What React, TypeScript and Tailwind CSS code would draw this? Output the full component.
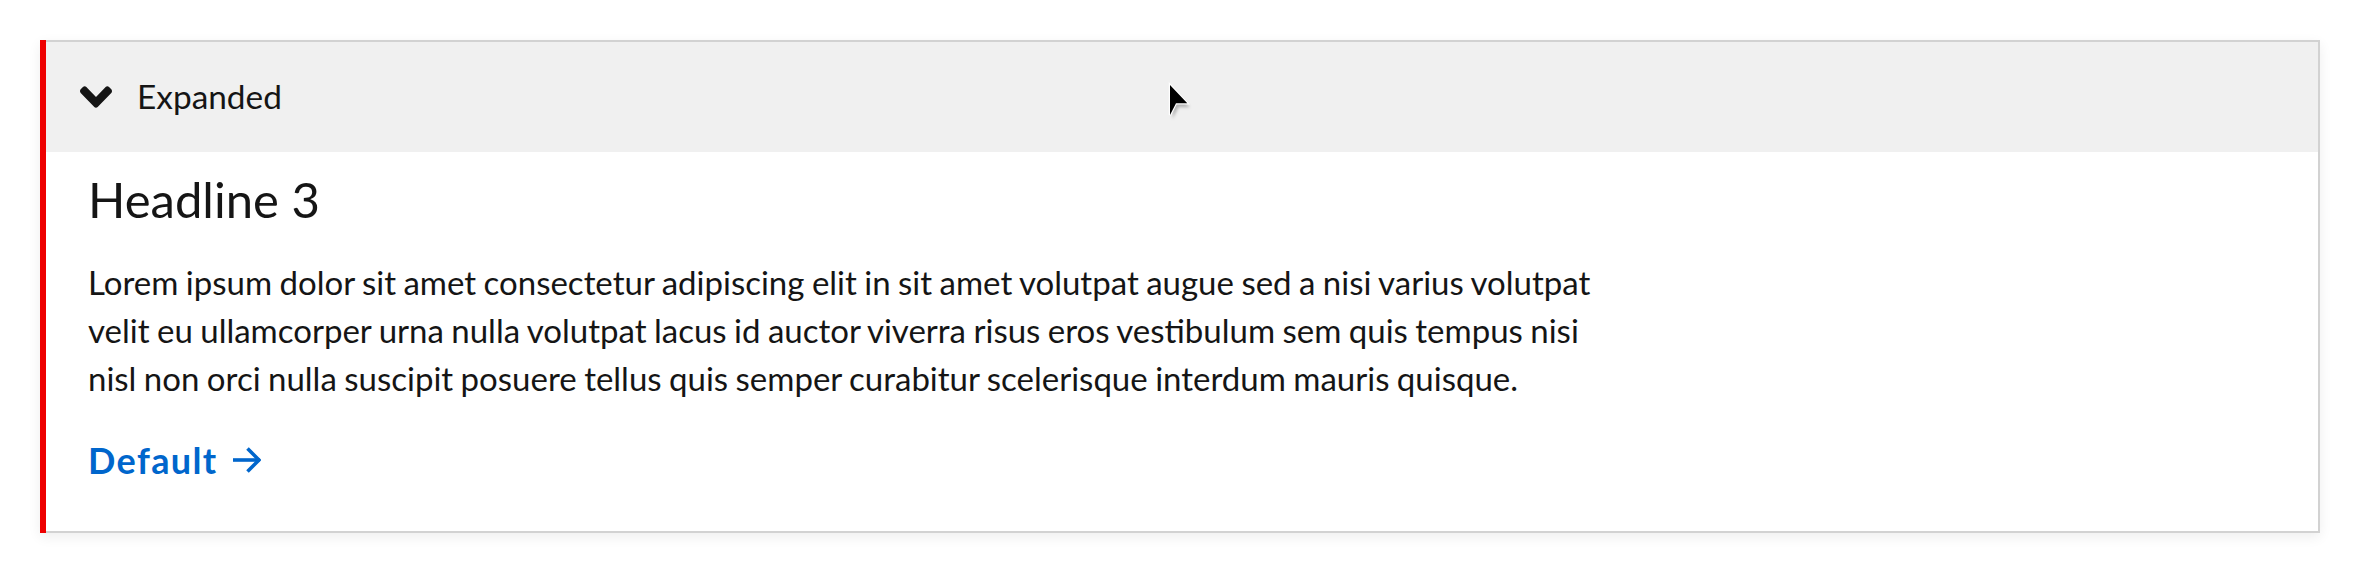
import React from "react";

function Chevron() {
  return (
    <svg width="32" height="22" viewBox="0 150 320 212" preserveAspectRatio="none" className="shrink-0">
      <path
        fill="#151515"
        d="M143 352.3L7 216.3c-9.4-9.4-9.4-24.6 0-33.9l22.6-22.6c9.4-9.4 24.6-9.4 33.9 0l96.4 96.4 96.4-96.4c9.4-9.4 24.6-9.4 33.9 0l22.6 22.6c9.4 9.4 9.4 24.6 0 33.9l-136 136c-9.4 9.5-24.6 9.5-34 .1z"
      />
    </svg>
  );
}

function Arrow() {
  return (
    <svg width="28" height="28" viewBox="0 0 28 28" className="shrink-0">
      <path d="M1 14H25" stroke="#0066cc" strokeWidth="3.6" fill="none" strokeLinecap="square" />
      <path d="M14.5 2.5L26 14L14.5 25.5" stroke="#0066cc" strokeWidth="3.6" fill="none" strokeLinejoin="miter" strokeLinecap="butt" />
    </svg>
  );
}

function Cursor() {
  return (
    <svg width="30" height="44" viewBox="0 0 30 44" className="absolute left-[1166px] top-[79px]">
      <defs>
        <filter id="cs" x="-50%" y="-50%" width="200%" height="200%">
          <feGaussianBlur stdDeviation="1.5" />
        </filter>
      </defs>
      <path d="M5 8L22.3 26.3H11L5 38Z" fill="rgba(0,0,0,0.25)" filter="url(#cs)" transform="translate(1.5,2)" />
      <path
        d="M4 6L21.3 24.3H10L4 36Z"
        fill="#000"
        stroke="#fff"
        strokeWidth="2.4"
        strokeLinejoin="miter"
        paintOrder="stroke"
      />
    </svg>
  );
}

export default function App() {
  const font = { fontFamily: "Lato, 'Liberation Sans', sans-serif" };
  return (
    <div className="relative w-[2360px] h-[574px] bg-white pt-[40px] pl-[40px]" style={font}>
      <div className="flex w-[2280px] shadow-[0_4px_12px_rgba(0,0,0,0.07)]">
        <div className="w-[6px] bg-[#ee0000] shrink-0" />
        <div className="flex-1 flex flex-col border-t-2 border-r-2 border-b-2 border-[#d2d2d2] bg-white">
          <div className="h-[110px] bg-[#f0f0f0] flex items-center pl-[34px] gap-[25px]">
            <Chevron />
            <span className="text-[33.4px] leading-none text-[#151515]">Expanded</span>
          </div>
          <div className="pt-[17px] pl-[42px] pb-[47px] text-[#151515]">
            <h3 className="text-[49px] leading-[60px] font-normal">Headline 3</h3>
            <p className="mt-[29px] text-[33px] leading-[48px] [word-spacing:-1px] whitespace-nowrap">
              Lorem ipsum dolor sit amet consectetur adipiscing elit in sit amet volutpat augue sed a nisi varius volutpat
              <br />
              velit eu ullamcorper urna nulla volutpat lacus id auctor viverra risus eros vestibulum sem quis tempus nisi
              <br />
              nisl non orci nulla suscipit posuere tellus quis semper curabitur scelerisque interdum mauris quisque.
            </p>
            <a className="mt-[34px] flex items-center gap-[15px] text-[36px] leading-[48px] font-bold tracking-[1.4px] text-[#0066cc]">
              <span>Default</span>
              <Arrow />
            </a>
          </div>
        </div>
      </div>
      <Cursor />
    </div>
  );
}
